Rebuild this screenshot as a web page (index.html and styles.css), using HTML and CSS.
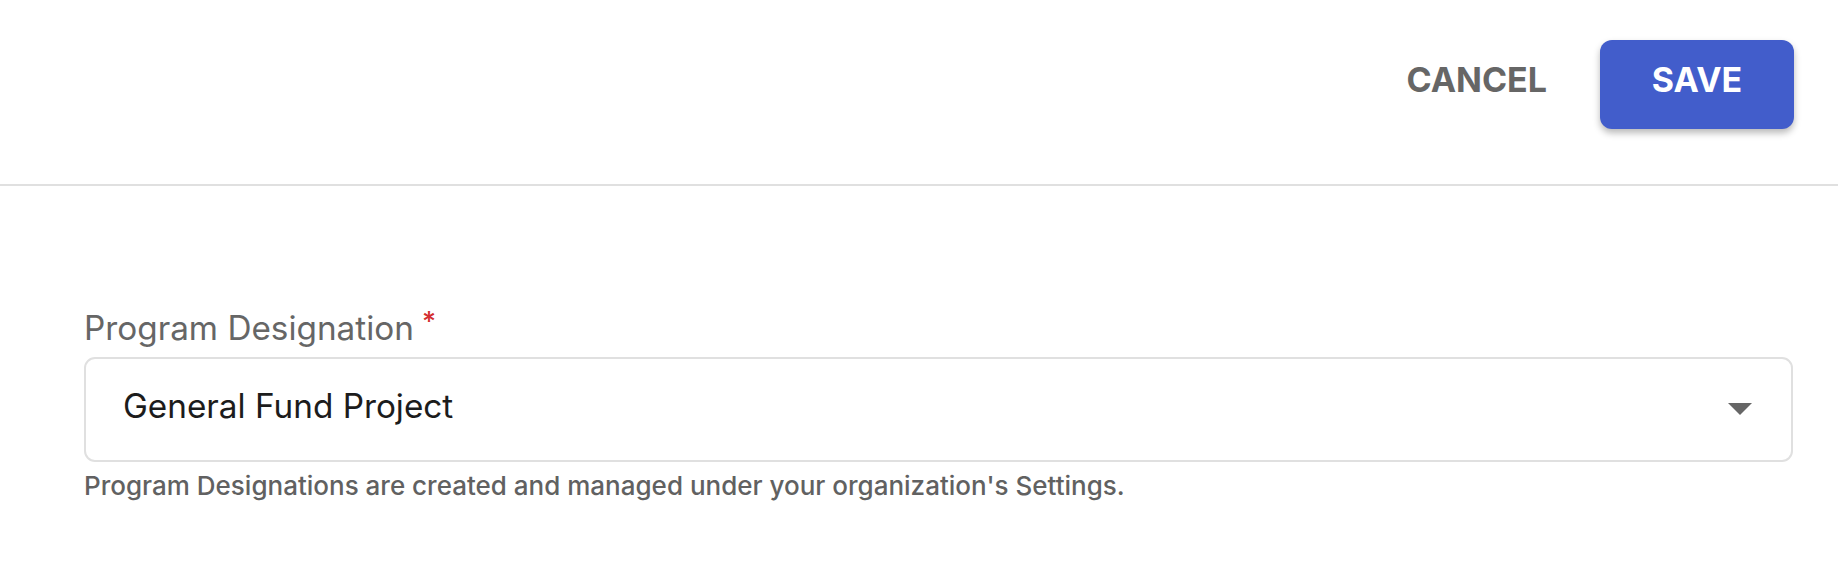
FILE: index.html
```html
<!DOCTYPE html>
<html>
<head>
<meta charset="utf-8">
<link rel="stylesheet" href="styles.css">
</head>
<body>
<header class="topbar">
  <div class="actions">
    <button class="btn btn-text" type="button">CANCEL</button>
    <button class="btn btn-primary" type="button">SAVE</button>
  </div>
</header>
<main class="content">
  <div class="field">
    <label class="field-label">Program Designation<span class="required">*</span></label>
    <div class="select">
      <span class="select-value">General Fund Project</span>
      <svg class="select-arrow" width="24" height="12" viewBox="0 0 24 12" aria-hidden="true"><path d="M0 0H24L12 12Z" fill="#666"/></svg>
    </div>
    <p class="field-help">Program Designations are created and managed under your organization's Settings.</p>
  </div>
</main>
</body>
</html>
```
FILE: styles.css
```css
* { box-sizing: border-box; }
html, body { margin: 0; padding: 0; background: #fff; }
body { font-family: "Inter", "Lato", sans-serif; color: #666; }

.topbar {
  height: 186px;
  border-bottom: 2px solid #e0e0e0;
  display: flex;
  justify-content: flex-end;
  align-items: flex-start;
  padding: 40px 44px 0 0;
}
.actions { display: flex; align-items: center; gap: 53px; }
.btn {
  font-family: inherit;
  font-size: 34px;
  font-weight: 700;
  letter-spacing: 0;
  border: 0;
  height: 89px;
  line-height: 42px;
  padding: 0 0 10px;
  display: flex;
  align-items: center;
  justify-content: center;
  cursor: pointer;
}
.btn-text { background: transparent; color: #666; }
.btn-primary {
  width: 194px;
  background: #425dcb;
  color: #fff;
  border-radius: 12px;
  box-shadow: 0 4px 7px rgba(0, 0, 0, 0.28);
}

.content { padding: 122px 45px 0 84px; }
.field-label {
  display: block;
  font-size: 33.3px;
  line-height: 40px;
  color: #666;
  margin-bottom: 9px;
}
.required {
  color: #d32f2f;
  font-size: 27px;
  font-weight: 500;
  margin-left: 8px;
  vertical-align: top;
  line-height: 28px;
}
.select {
  height: 105px;
  border: 2px solid #e0e0e0;
  border-radius: 11px;
  display: flex;
  align-items: center;
  justify-content: space-between;
  padding: 0 39px 7px 37px;
}
.select-value { font-size: 33.3px; line-height: 40px; color: #1c1c1c; }
.select-arrow { display: block; margin-top: 5px; }
.field-help {
  margin: 8px 0 0;
  font-size: 26px;
  line-height: 32px;
  font-weight: 500;
  color: #616161;
}
```
